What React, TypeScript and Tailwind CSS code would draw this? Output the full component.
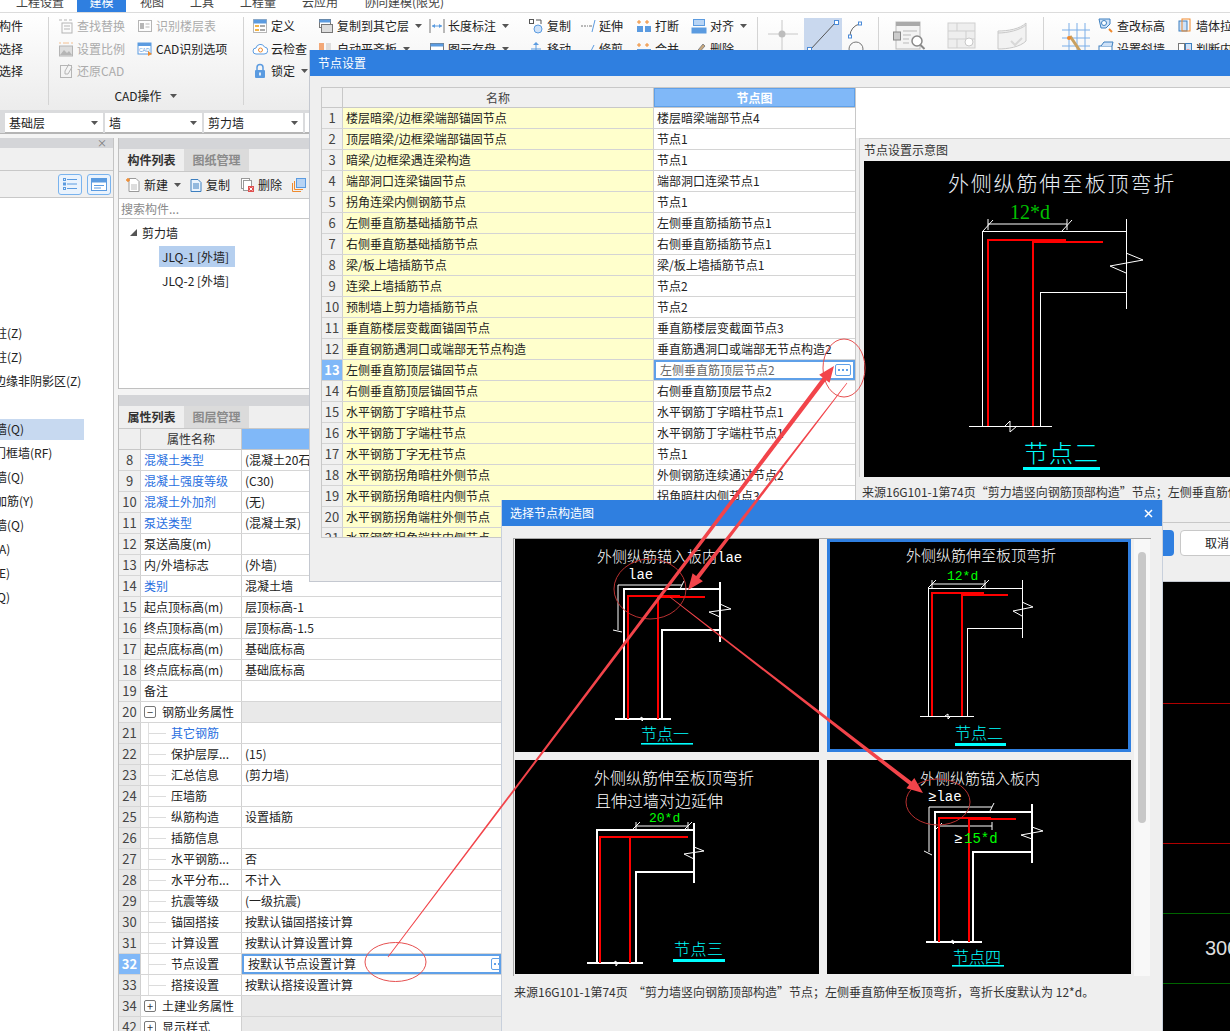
import React from "react";

const CJK = "Noto Sans CJK SC, sans-serif";

const Caret = ({ c = "#555" }: { c?: string }) => (
  <svg width="7" height="4" viewBox="0 0 7 4" className="shrink-0"><path d="M0 0h7L3.5 4z" fill={c} /></svg>
);

type IconName =
  | "find" | "scale" | "restore" | "layers" | "cadopt" | "define" | "cloud" | "lock" | "copylayer" | "flush"
  | "dim" | "store" | "copy" | "extend" | "move" | "trim" | "break" | "merge" | "align" | "del" | "level"
  | "pull" | "slant" | "judge";

const Icon = ({ n }: { n: IconName }) => {
  const g = "#b5b5b5";
  const b = "#5b9be0";
  const o = "#ef8a2e";
  const p: Record<IconName, React.ReactNode> = {
    find: (<><path d="M1 2h3M6 2h3M11 2h3" stroke={g} /><rect x="4" y="5" width="10" height="10" fill="none" stroke={g} /><path d="M6 8h6M6 11h6" stroke={g} /></>),
    scale: (<><path d="M2 1v2M14 1v2M5 2h6" stroke={o} opacity=".5" /><rect x="1.5" y="5" width="13" height="10" fill="#ddd" stroke={g} /><path d="M2 14l4-5 3 3 2-2 3 4z" fill={g} /></>),
    restore: (<><rect x="2.5" y="2.5" width="11" height="12" fill="none" stroke={g} /><path d="M11 1L7 8v3h3l4-7" fill="none" stroke={g} /></>),
    layers: (<><rect x="1.5" y="2.5" width="13" height="11" fill="none" stroke={g} /><rect x="3" y="5" width="4" height="6" fill={g} /><path d="M8.5 6h4M8.5 9h4" stroke={g} /></>),
    cadopt: (<><rect x="1" y="2" width="13" height="11" fill="#fff" stroke={b} /><rect x="1" y="2" width="13" height="3" fill={b} /><text x="2" y="11" fontSize="5" fill={b} fontFamily="Liberation Sans">CAD</text><path d="M11 10l4 3-4 2z" fill={o} /></>),
    define: (<><rect x="1.5" y="1.5" width="13" height="13" fill="#fff" stroke="#b7b7b7" /><rect x="1.5" y="1.5" width="13" height="4" fill={b} /><rect x="3" y="7" width="4" height="2" fill="#f3b447" /><rect x="8" y="7" width="5" height="2" fill="#aaa" /><rect x="3" y="11" width="4" height="2" fill="#f3b447" /><rect x="8" y="11" width="5" height="2" fill="#aaa" /></>),
    cloud: (<><path d="M4 13a3 3 0 010-6 4.5 4.5 0 018.5-1A3.5 3.5 0 0112 13z" fill="#fff" stroke={b} /><circle cx="8.5" cy="9" r="2" fill="none" stroke={o} /></>),
    lock: (<><path d="M5 7V4.5a3 3 0 016 0V7" fill="none" stroke={b} strokeWidth="1.5" /><rect x="3" y="7" width="10" height="8" rx="1" fill={b} /><rect x="7.2" y="9.5" width="1.6" height="3" fill="#fff" /></>),
    copylayer: (<><rect x="1.5" y="1.5" width="11" height="8" fill="#fff" stroke="#777" /><rect x="1.5" y="1.5" width="11" height="3" fill={b} /><rect x="3.5" y="6.5" width="11" height="8" fill="#ddd" stroke="#777" /></>),
    flush: (<><rect x="1" y="2" width="5" height="12" fill="#f3a877" /><rect x="8" y="2" width="5" height="12" fill="#ddd" /></>),
    dim: (<><path d="M1 1v14M15 1v14" stroke="#777" /><path d="M3 8h10" stroke={b} /><path d="M3 8l3-2v4zM13 8l-3-2v4z" fill={b} /></>),
    store: (<><rect x="1.5" y="2.5" width="13" height="11" fill="#fff" stroke="#777" /><rect x="1.5" y="2.5" width="13" height="3" fill={b} /></>),
    copy: (<><circle cx="10" cy="11" r="4" fill="#cfe2f8" stroke={b} /><rect x="1.5" y="1.5" width="4" height="4" fill="none" stroke="#555" /><path d="M8 2h5v4" fill="none" stroke="#555" /></>),
    extend: (<><path d="M1 8h7" stroke="#777" strokeDasharray="2 1" /><path d="M9 8h3" stroke="#777" /><path d="M15 2l-3 12" stroke={b} /></>),
    move: (<><path d="M8 1l3 3H5z" fill={b} /><path d="M8 4v8M3 8h10" stroke={b} /></>),
    trim: (<><path d="M1 10h6" stroke="#777" /><path d="M9 14l5-10" stroke={b} /></>),
    break: (<><path d="M3 2v4M1 4h4M11 2v4M9 4h4" stroke={o} /><rect x="1" y="8" width="6" height="6" fill={b} /><rect x="9" y="8" width="6" height="6" fill={b} /></>),
    merge: (<><path d="M3 2v4M1 4h4M11 2v4M9 4h4" stroke={o} /><rect x="1" y="8" width="14" height="6" fill={b} /></>),
    align: (<><rect x="2.5" y="1.5" width="11" height="6" fill="#b7d4f5" stroke={b} /><rect x="0.5" y="9.5" width="15" height="6" fill={b} /></>),
    del: (<><path d="M3 14L12 3l2 2-9 10z" fill="#c9a77b" stroke="#888" /></>),
    level: (<><path d="M1 1h11v5l-4 4H3z" fill="#cfe2f8" stroke="#3d7fbf" /><circle cx="6" cy="5" r="2.5" fill="#fff" stroke="#3d7fbf" /><path d="M11 11l3 3" stroke={o} strokeWidth="2" /></>),
    pull: (<><rect x="2" y="3" width="8" height="10" fill="#cfe2f8" stroke="#3d7fbf" /><rect x="5" y="1" width="8" height="12" fill="none" stroke={o} /></>),
    slant: (<><rect x="1" y="5" width="13" height="9" fill="#fff" stroke="#3d7fbf" /><path d="M3 5l3-4h9l-1 4" fill="#cfe2f8" stroke="#3d7fbf" /></>),
    judge: (<><rect x="1.5" y="2.5" width="6" height="10" fill="#fff" stroke="#777" /><rect x="8.5" y="2.5" width="6" height="10" fill="#cfe2f8" stroke="#3d7fbf" /><circle cx="11" cy="10" r="2" fill="#f08a8a" /></>),
  };
  return <svg width="16" height="16" viewBox="0 0 16 16" className="shrink-0">{p[n]}</svg>;
};

const RibbonRow = ({ n, t, gray, caret, gap = 3 }: { n: IconName; t: string; gray?: boolean; caret?: boolean; gap?: number }) => (
  <div className="flex items-center h-[22.5px] whitespace-nowrap">
    <Icon n={n} />
    <span className={gray ? "text-[#ababab]" : "text-[#222]"} style={{ marginLeft: gap }}>{t}</span>
    {caret && <span className="ml-[6px]"><Caret /></span>}
  </div>
);

const Divider = () => <div className="w-px h-[88px] mt-[4px] bg-[#d4d4d4] shrink-0" />;

const Ribbon = () => (
  <div className="flex h-[98px] shrink-0 border-t border-[#dcdcdc] bg-gradient-to-b from-white to-[#ececec] text-[12px] leading-[16px] overflow-hidden">
    <div className="w-[48px] shrink-0 pt-[2px]">
      <div className="w-[23px] flex flex-col items-end overflow-hidden">
        <div className="h-[22.5px] flex items-center whitespace-nowrap">构件</div>
        <div className="h-[22.5px] flex items-center whitespace-nowrap">选择</div>
        <div className="h-[22.5px] flex items-center whitespace-nowrap">性选择</div>
      </div>
    </div>
    <Divider />
    <div className="w-[194px] shrink-0 pl-[9px] pt-[2px]">
      <div className="flex">
        <div className="w-[79px]">
          <RibbonRow n="find" t="查找替换" gray />
          <RibbonRow n="scale" t="设置比例" gray />
          <RibbonRow n="restore" t="还原CAD" gray />
        </div>
        <div>
          <RibbonRow n="layers" t="识别楼层表" gray />
          <RibbonRow n="cadopt" t="CAD识别选项" />
        </div>
      </div>
      <div className="flex items-center justify-center gap-[8px] mt-[3px] ml-[-10px] h-[20px] text-[#222]">CAD操作 <Caret /></div>
    </div>
    <Divider />
    <div className="flex w-[513px] shrink-0 pl-[8px] pt-[2px]">
      <div className="w-[66px]">
        <RibbonRow n="define" t="定义" />
        <RibbonRow n="cloud" t="云检查" />
        <RibbonRow n="lock" t="锁定" caret />
      </div>
      <div className="w-[111px]">
        <RibbonRow n="copylayer" t="复制到其它层" caret />
        <RibbonRow n="flush" t="自动平齐板" caret />
      </div>
      <div className="w-[99px]">
        <RibbonRow n="dim" t="长度标注" caret />
        <RibbonRow n="store" t="图元存盘" caret />
      </div>
      <div className="w-[52px]">
        <RibbonRow n="copy" t="复制" />
        <RibbonRow n="move" t="移动" />
      </div>
      <div className="w-[56px]">
        <RibbonRow n="extend" t="延伸" />
        <RibbonRow n="trim" t="修剪" />
      </div>
      <div className="w-[55px]">
        <RibbonRow n="break" t="打断" />
        <RibbonRow n="merge" t="合并" />
      </div>
      <div>
        <RibbonRow n="align" t="对齐" caret />
        <RibbonRow n="del" t="删除" />
      </div>
    </div>
    <Divider />
    <div className="flex w-[120px] shrink-0 pt-[5px] items-start">
      <svg width="46" height="36" viewBox="0 0 46 36" className="shrink-0">
        <path d="M24 2v30M10 16h30" stroke="#c8c8c8" />
        <circle cx="24" cy="16" r="3.5" fill="#bdbdbd" />
      </svg>
      <div className="w-[38px] h-[40px] bg-[#c9d8ee] shrink-0">
        <svg width="38" height="40" viewBox="0 0 38 40">
          <path d="M6 32L32 4" stroke="#555" />
          <rect x="3.5" y="29.5" width="4" height="4" fill="#fff" stroke="#4a8ad8" />
          <rect x="30.5" y="2.5" width="4" height="4" fill="#fff" stroke="#4a8ad8" />
        </svg>
      </div>
      <svg width="20" height="44" viewBox="0 0 20 44" className="ml-[4px] shrink-0">
        <path d="M4 18a12 12 0 0 1 10-12" fill="none" stroke="#666" />
        <rect x="12.5" y="4" width="3" height="3" fill="#fff" stroke="#4a8ad8" />
        <rect x="2.5" y="17" width="3" height="3" fill="#fff" stroke="#4a8ad8" />
        <circle cx="10" cy="31" r="7" fill="none" stroke="#777" />
      </svg>
    </div>
    <Divider />
    <div className="flex w-[164px] shrink-0 pt-[8px] pl-[14px] gap-[20px] items-start">
      <svg width="34" height="30" viewBox="0 0 34 30" className="shrink-0">
        <rect x="3" y="1" width="24" height="27" fill="#f4f4f4" stroke="#bbb" />
        <rect x="3" y="1" width="24" height="4" fill="#aaa" />
        <rect x="0.5" y="11" width="7" height="8" fill="#ccc" stroke="#888" />
        <path d="M10 10h14M10 14h8M10 18h6M10 22h6" stroke="#bbb" />
        <circle cx="24" cy="20" r="5" fill="#fff" stroke="#888" strokeWidth="1.5" />
        <path d="M27.5 24l4 4" stroke="#888" strokeWidth="2" />
      </svg>
      <svg width="30" height="30" viewBox="0 0 30 30" className="shrink-0">
        <rect x="1" y="2" width="27" height="25" fill="#eee" stroke="#cfcfcf" />
        <path d="M1 10h27M1 18h27M10 2v8M19 10v8M10 18v9" stroke="#cfcfcf" />
        <circle cx="22" cy="21" r="4" fill="#fff" stroke="#c8c8c8" />
      </svg>
      <svg width="30" height="30" viewBox="0 0 30 30" className="shrink-0">
        <path d="M1 10c10 0 22-2 28-8v18c-6 6-18 8-28 8z" fill="#f2f2f2" stroke="#c8c8c8" />
        <path d="M1 12c10 0 22-3 28-8" fill="none" stroke="#c8c8c8" />
        <path d="M14 20l4 4 7-7" fill="none" stroke="#d8d8d8" strokeWidth="2" />
      </svg>
    </div>
    <Divider />
    <div className="flex flex-1 pl-[16px] pt-[2px] overflow-hidden">
      <svg width="30" height="36" viewBox="0 0 30 36" className="shrink-0 mt-[7px]">
        <path d="M2 8h28M2 16h28M2 24h28M9 1v32M17 1v32M25 1v32" stroke="#7aaee8" />
        <path d="M10 14l12 18" stroke="#c9a060" strokeWidth="3" />
        <circle cx="9" cy="16" r="2" fill="#ef8a2e" />
      </svg>
      <div className="w-[79px] ml-[8px] shrink-0">
        <RibbonRow n="level" t="查改标高" />
        <RibbonRow n="slant" t="设置斜墙" />
      </div>
      <div className="shrink-0">
        <RibbonRow n="pull" t="墙体拉通" />
        <RibbonRow n="judge" t="判断内外墙" />
      </div>
    </div>
  </div>
);

const Combo = ({ t, w }: { t: string; w: string }) => (
  <div className={`${w} h-[20px] bg-white border-b border-[#b5b5b5] flex items-center justify-between pl-[4px] pr-[5px] text-[12px] shrink-0`}>
    <span>{t}</span>
    <Caret />
  </div>
);

const LeftPanel = () => {
  const items: [string, string, boolean?][] = [
    ["柱(Z)", "-ml-[5px]"],
    ["柱(Z)", "-ml-[5px]"],
    ["边缘非阴影区(Z)", "-ml-[6px]"],
    ["", ""],
    ["墙(Q)", "-ml-[5px]", true],
    ["门框墙(RF)", "-ml-[6px]"],
    ["墙(Q)", "-ml-[5px]"],
    ["加筋(Y)", "-ml-[5px]"],
    ["墙(Q)", "-ml-[5px]"],
    ["(A)", "-ml-[5px]"],
    ["(E)", "-ml-[5px]"],
    ["(Q)", "-ml-[7px]"],
  ];
  return (
    <div className="w-[114px] shrink-0 bg-white border-r border-[#c4c4c4] flex flex-col overflow-hidden text-[12px]">
      <div className="h-[10px] shrink-0 bg-[#d4d5d8] flex items-center justify-end pr-[6px] text-[#777] text-[10px] leading-[10px]">×</div>
      <div className="h-[23px] shrink-0 bg-[#f0f0f0] border-b border-[#c8c8c8]" />
      <div className="h-[27px] shrink-0 bg-[#f0f0f0] border-b border-[#c8c8c8] flex items-center justify-end gap-[5px] pr-[2px]">
        <div className="w-[24px] h-[21px] rounded-[3px] border border-[#79b3ee] bg-[#eaf3fd] flex items-center justify-center">
          <svg width="14" height="12" viewBox="0 0 14 12"><path d="M4 1.5h10M4 6h10M4 10.5h10" stroke="#5b9be0" /><rect x="0.5" y="0.5" width="2" height="2" fill="none" stroke="#5b9be0" /><rect x="0.5" y="5" width="2" height="2" fill="none" stroke="#5b9be0" /><rect x="0.5" y="9.5" width="2" height="2" fill="none" stroke="#5b9be0" /></svg>
        </div>
        <div className="w-[24px] h-[21px] rounded-[3px] border border-[#79b3ee] bg-[#eaf3fd] flex items-center justify-center">
          <svg width="16" height="13" viewBox="0 0 16 13"><rect x="0.5" y="0.5" width="15" height="12" fill="#fff" stroke="#5b9be0" /><rect x="0.5" y="0.5" width="15" height="4" fill="#5b9be0" /><path d="M3 7.5h10M3 10h7" stroke="#5b9be0" /></svg>
        </div>
      </div>
      <div className="pt-[123px]">
        {items.map(([t, m, sel], i) => (
          <div key={i} className="h-[24px] flex items-center whitespace-nowrap">
            <div className={`h-[21px] flex items-center w-[84px] ${sel ? "bg-[#c7d9f0]" : ""}`}>
              <span className={m}>{t}</span>
            </div>
          </div>
        ))}
      </div>
    </div>
  );
};

const Tabs = ({ a, b }: { a: string; b: string }) => (
  <div className="h-[23px] shrink-0 flex bg-[#efefef] border-b border-[#c8c8c8] text-[12px] font-bold">
    <div className="w-[65px] flex items-center justify-center text-[#333]">{a}</div>
    <div className="w-[65px] flex items-center justify-center bg-[#dbdbdb] text-[#8a8a8a]">{b}</div>
  </div>
);

const MiniIcon = ({ k }: { k: number }) => (
  <svg width="16" height="16" viewBox="0 0 16 16" className="shrink-0">
    {k === 0 && (<><path d="M4 1.5h7l3 3v10H4z" fill="#fff" stroke="#9a9a9a" /><path d="M6 8h6M6 10h6M6 12h6" stroke="#bbb" /><path d="M3 1v4M1 3h4" stroke="#ef8a2e" strokeWidth="1.4" /></>)}
    {k === 1 && (<><path d="M3 2.5h7l3 3v9H3z" fill="#eaf3fd" stroke="#3d7fbf" /><path d="M5 7h6M5 9h6M5 11h6" stroke="#3d7fbf" /></>)}
    {k === 2 && (<><rect x="2.5" y="1.5" width="8" height="10" fill="#fff" stroke="#999" /><rect x="4.5" y="3.5" width="8" height="10" fill="#fff" stroke="#999" /><rect x="9" y="9" width="6" height="6" fill="#e05050" /><path d="M10.5 10.5l3 3M13.5 10.5l-3 3" stroke="#fff" /></>)}
    {k === 3 && (<><path d="M1.5 6v8.5H10M3.5 4v8.5H12" fill="none" stroke="#ef8a2e" /><rect x="5.5" y="1.5" width="9" height="9" fill="#b7d4f5" stroke="#5b9be0" /></>)}
  </svg>
);

const MidTop = () => (
  <div className="h-[251px] shrink-0 border-l border-r border-b border-[#c0c0c0] bg-white flex flex-col text-[12px] overflow-hidden">
    <div className="h-[11px] bg-[#d4d5d8] shrink-0" />
    <Tabs a="构件列表" b="图纸管理" />
    <div className="h-[27px] flex items-center bg-[#f0f0f0] border-b border-[#c8c8c8] pl-[6px] shrink-0 whitespace-nowrap">
      <MiniIcon k={0} /><span className="ml-[3px]">新建</span><span className="ml-[6px] mr-[7px]"><Caret /></span>
      <MiniIcon k={1} /><span className="ml-[2px] mr-[9px]">复制</span>
      <MiniIcon k={2} /><span className="ml-[3px] mr-[9px]">删除</span>
      <MiniIcon k={3} />
    </div>
    <div className="h-[20px] flex items-center pl-[2px] text-[#8a8a8a] border-b border-[#c8c8c8] shrink-0">搜索构件...</div>
    <div className="pl-[11px] pt-[3px]">
      <div className="h-[21px] flex items-center gap-[5px]">
        <svg width="7" height="7" viewBox="0 0 7 7"><path d="M7 0v7H0z" fill="#555" /></svg>
        <span>剪力墙</span>
      </div>
      <div className="ml-[29px] mt-[3px] w-[76px] h-[21px] bg-[#b5cfef] flex items-center pl-[3px] whitespace-nowrap">JLQ-1 [外墙]</div>
      <div className="ml-[29px] mt-[3px] h-[21px] flex items-center pl-[3px] whitespace-nowrap">JLQ-2 [外墙]</div>
    </div>
  </div>
);

const Dots = () => (
  <span className="w-[16px] h-[12px] border border-[#5fa0e8] rounded-[2px] flex items-center justify-center gap-[2px] shrink-0 bg-white">
    <span className="w-[2px] h-[2px] bg-[#5fa0e8]" />
    <span className="w-[2px] h-[2px] bg-[#5fa0e8]" />
    <span className="w-[2px] h-[2px] bg-[#5fa0e8]" />
  </span>
);

type Prop = { n: string; name: string; value?: string; blue?: boolean; tree?: boolean; group?: "+" | "-"; sel?: boolean };

const props: Prop[] = [
  { n: "8", name: "混凝土类型", value: "(混凝土20石)", blue: true },
  { n: "9", name: "混凝土强度等级", value: "(C30)", blue: true },
  { n: "10", name: "混凝土外加剂", value: "(无)", blue: true },
  { n: "11", name: "泵送类型", value: "(混凝土泵)", blue: true },
  { n: "12", name: "泵送高度(m)" },
  { n: "13", name: "内/外墙标志", value: "(外墙)" },
  { n: "14", name: "类别", value: "混凝土墙", blue: true },
  { n: "15", name: "起点顶标高(m)", value: "层顶标高-1" },
  { n: "16", name: "终点顶标高(m)", value: "层顶标高-1.5" },
  { n: "17", name: "起点底标高(m)", value: "基础底标高" },
  { n: "18", name: "终点底标高(m)", value: "基础底标高" },
  { n: "19", name: "备注" },
  { n: "20", name: "钢筋业务属性", group: "-" },
  { n: "21", name: "其它钢筋", tree: true, blue: true },
  { n: "22", name: "保护层厚...", value: "(15)", tree: true },
  { n: "23", name: "汇总信息", value: "(剪力墙)", tree: true },
  { n: "24", name: "压墙筋", tree: true },
  { n: "25", name: "纵筋构造", value: "设置插筋", tree: true },
  { n: "26", name: "插筋信息", tree: true },
  { n: "27", name: "水平钢筋...", value: "否", tree: true },
  { n: "28", name: "水平分布...", value: "不计入", tree: true },
  { n: "29", name: "抗震等级", value: "(一级抗震)", tree: true },
  { n: "30", name: "锚固搭接", value: "按默认锚固搭接计算", tree: true },
  { n: "31", name: "计算设置", value: "按默认计算设置计算", tree: true },
  { n: "32", name: "节点设置", value: "按默认节点设置计算", tree: true, sel: true },
  { n: "33", name: "搭接设置", value: "按默认搭接设置计算", tree: true },
  { n: "34", name: "土建业务属性", group: "+" },
  { n: "42", name: "显示样式", group: "+" },
];

const PropRow = ({ p, idx }: { p: Prop; idx: number }) => (
  <div className="flex h-[21px] border-b border-[#d6d6d6] shrink-0">
    <div className={`w-[22px] shrink-0 flex items-center justify-center border-r border-[#d0d0d0] text-[13px] ${p.sel ? "bg-[#80b8f8] text-white font-bold" : idx >= 13 ? "bg-[#e8e8e8] text-[#444]" : "bg-[#f0f0f0] text-[#444]"}`}>{p.n}</div>
    <div className={`w-[101px] shrink-0 flex items-center border-r border-[#d0d0d0] bg-white whitespace-nowrap ${p.blue ? "text-[#2a6fe0]" : "text-[#222]"}`}>
      {p.group && (
        <span className="ml-[3px] mr-[6px] w-[12px] h-[12px] border border-[#777] rounded-[2px] flex items-center justify-center text-[11px] leading-[10px] text-[#333]">{p.group === "-" ? "−" : "+"}</span>
      )}
      {p.tree && (<><span className="ml-[7px] w-px self-stretch bg-[#e0e0e0]" /><span className="w-[17px] h-px bg-[#dcdcdc]" /><span className="w-[5px]" /></>)}
      {!p.group && !p.tree && <span className="w-[3px]" />}
      <span>{p.name}</span>
    </div>
    {p.sel ? (
      <div className="flex-1 flex items-center justify-between border-2 border-[#5fa0e8] pl-[4px] bg-white overflow-hidden">
        <span>{p.value}</span>
        <span className="mr-[-8px]"><Dots /></span>
      </div>
    ) : (
      <div className={`flex-1 flex items-center pl-[3px] whitespace-nowrap ${p.group ? "bg-[#e9e9e9]" : "bg-white"}`}>{p.value}</div>
    )}
  </div>
);

const MidBottom = () => (
  <div className="flex-1 min-h-0 border-l border-r border-[#c0c0c0] bg-white flex flex-col text-[12px] overflow-hidden mt-[6px]">
    <div className="h-[11px] bg-[#d4d5d8] shrink-0" />
    <Tabs a="属性列表" b="图层管理" />
    <div className="flex h-[21px] border-b border-[#c8c8c8] shrink-0">
      <div className="w-[22px] bg-[#efefef] border-r border-[#c8c8c8]" />
      <div className="w-[101px] bg-[#efefef] border-r border-[#c8c8c8] flex items-center justify-center text-[#333]">属性名称</div>
      <div className="flex-1 bg-[#80b8f8]" />
    </div>
    {props.map((p, i) => <PropRow key={p.n} p={p} idx={i} />)}
  </div>
);

const nodes: [string, string][] = [
  ["楼层暗梁/边框梁端部锚固节点", "楼层暗梁端部节点4"],
  ["顶层暗梁/边框梁端部锚固节点", "节点1"],
  ["暗梁/边框梁遇连梁构造", "节点1"],
  ["端部洞口连梁锚固节点", "端部洞口连梁节点1"],
  ["拐角连梁内侧钢筋节点", "节点1"],
  ["左侧垂直筋基础插筋节点", "左侧垂直筋插筋节点1"],
  ["右侧垂直筋基础插筋节点", "右侧垂直筋插筋节点1"],
  ["梁/板上墙插筋节点", "梁/板上墙插筋节点1"],
  ["连梁上墙插筋节点", "节点2"],
  ["预制墙上剪力墙插筋节点", "节点2"],
  ["垂直筋楼层变截面锚固节点", "垂直筋楼层变截面节点3"],
  ["垂直钢筋遇洞口或端部无节点构造", "垂直筋遇洞口或端部无节点构造2"],
  ["左侧垂直筋顶层锚固节点", "左侧垂直筋顶层节点2"],
  ["右侧垂直筋顶层锚固节点", "右侧垂直筋顶层节点2"],
  ["水平钢筋丁字暗柱节点", "水平钢筋丁字暗柱节点1"],
  ["水平钢筋丁字端柱节点", "水平钢筋丁字端柱节点1"],
  ["水平钢筋丁字无柱节点", "节点1"],
  ["水平钢筋拐角暗柱外侧节点", "外侧钢筋连续通过节点2"],
  ["水平钢筋拐角暗柱内侧节点", "拐角暗柱内侧节点3"],
  ["水平钢筋拐角端柱外侧节点", "拐角端柱外侧节点1"],
  ["水平钢筋拐角端柱内侧节点", "拐角端柱内侧节点1"],
];

const NodeTable = () => (
  <div className="w-[535px] h-[451px] shrink-0 border border-[#c8c8c8] bg-white overflow-hidden text-[12px]">
    <div className="flex h-[20px] border-b border-[#c8c8c8]">
      <div className="w-[21px] bg-[#f0f0f0] border-r border-[#c8c8c8]" />
      <div className="w-[311px] bg-[#f0f0f0] border-r border-[#c8c8c8] flex items-center justify-center text-[#444]">名称</div>
      <div className="flex-1 bg-[#80b8f8] border border-[#5fa0e8] flex items-center justify-center text-white font-bold">节点图</div>
    </div>
    {nodes.map(([a, b], i) => {
      const sel = i === 12;
      return (
        <div key={i} className="flex h-[21px] border-b border-[#d4d4d4]">
          <div className={`w-[21px] shrink-0 flex items-center justify-center border-r border-[#d0d0d0] text-[13px] ${sel ? "bg-[#80b8f8] text-white font-bold" : "bg-[#f0f0f0] text-[#444]"}`}>{i + 1}</div>
          <div className="w-[311px] shrink-0 bg-[#ffffcc] border-r border-[#d0d0d0] flex items-center pl-[3px] text-[#222] whitespace-nowrap">{a}</div>
          {sel ? (
            <div className="flex-1 flex items-center justify-between border-2 border-[#5fa0e8] pl-[4px] pr-[2px]">
              <span className="text-[#666]">{b}</span>
              <Dots />
            </div>
          ) : (
            <div className="flex-1 flex items-center pl-[3px] text-[#222] whitespace-nowrap">{b}</div>
          )}
        </div>
      );
    })}
  </div>
);

type DProps = {
  walls: string[];
  reds: string[];
  thin?: string[];
  zig: string;
  brk: string;
  redW?: number;
  wallW?: number;
};

const Lines = ({ walls, reds, thin = [], zig, brk, redW = 2, wallW = 1 }: DProps) => (
  <>
    {walls.map((p, i) => <polyline key={i} points={p} fill="none" stroke="#fff" strokeWidth={wallW} shapeRendering="crispEdges" />)}
    {thin.map((p, i) => <polyline key={i} points={p} fill="none" stroke="#fff" strokeWidth="1" />)}
    <polyline points={zig} fill="none" stroke="#fff" strokeWidth="1" />
    <polyline points={brk} fill="none" stroke="#fff" strokeWidth="1" />
    {reds.map((p, i) => <polyline key={i} points={p} fill="none" stroke="#ff0000" strokeWidth={redW} shapeRendering="crispEdges" />)}
  </>
);

const Tx = ({ x, y, s, c = "#fff", f = CJK, ls = 0, t }: { x: number; y: number; s: number; c?: string; f?: string; ls?: number; t: string }) => (
  <text x={x} y={y} fontSize={s} fill={c} fontFamily={f} letterSpacing={ls} fontWeight={300}>{t}</text>
);

const MONO = "Liberation Mono, monospace";

const Preview = () => (
  <svg viewBox="863 161 367 316" width="367" height="316" className="block bg-black">
    <Tx x={947} y={191} s={21} ls={1.8} c="#e8eef5" t="外侧纵筋伸至板顶弯折" />
    <Tx x={1009} y={219} s={20} c="#00c000" f="Liberation Serif, serif" t="12*d" />
    <Lines
      walls={["1125,231 981,231 981,426", "1125,219 1125,309", "1125,292 1039,292 1039,426", "968,426 1051,426"]}
      thin={["987,224 1066,224", "987,219 987,230", "1066,219 1066,230", "982,231 992,220", "1061,231 1071,220"]}
      zig="1125,253 1142,260 1109,266 1125,273"
      brk="1004,426 1009,421 1009,432 1016,426"
      reds={["987,426 987,240 1065,240", "1032,426 1032,242 1102,242"]}
      redW={2.4}
    />
    <Tx x={1023} y={462} s={24} ls={1} c="#00ffff" t="节点二" />
    <rect x={1022} y={467} width={77} height={3} fill="#00ffff" />
  </svg>
);

const Cell1 = () => (
  <svg viewBox="515 539 304 213" width="304" height="213" className="block bg-black">
    <Tx x={597} y={562} s={15} t="外侧纵筋锚入板内" />
    <Tx x={717} y={562} s={14} f={MONO} t="lae" />
    <Tx x={628} y={579} s={14} f={MONO} t="lae" />
    <Lines
      walls={["720,589 624,589 624,719", "720,582 720,642", "720,630 662,630 662,719", "615,719 671,719"]}
      thin={["682,585 618,585 618,630", "613,630 622,632", "680,589 684,581"]}
      zig="720,604 731,609 709,612 720,617"
      brk="639,719 642,717 642,721 644,719"
      reds={["628,719 628,596 680,596", "658,719 658,597 705,597"]}
      wallW={1.5}
    />
    <Tx x={641} y={740} s={16} c="#00ffff" t="节点一" />
    <rect x={641} y={743} width={52} height={1.6} fill="#00ffff" />
  </svg>
);

const Cell2 = () => (
  <svg viewBox="830 542 298 207" width="298" height="207" className="block bg-black">
    <Tx x={906} y={561} s={15} t="外侧纵筋伸至板顶弯折" />
    <Tx x={947} y={580} s={13} c="#00ff00" f={MONO} t="12*d" />
    <Lines
      walls={["1022,588 928,588 928,716", "1022,580 1022,638", "1022,628 967,628 967,716", "920,716 974,716"]}
      thin={["932,584 985,584", "932,580 932,588", "985,580 985,588", "928,588 936,580", "981,588 989,580"]}
      zig="1022,602 1033,607 1013,611 1022,616"
      brk="945,716 948,714 948,719 951,716"
      reds={["932,716 932,593 984,593", "962,716 962,595 1008,595"]}
    />
    <Tx x={955} y={739} s={16} c="#00ffff" t="节点二" />
    <rect x={955} y={743} width={51} height={3} fill="#00ffff" />
  </svg>
);

const Cell3 = () => (
  <svg viewBox="515 760 304 214" width="304" height="214" className="block bg-black">
    <Tx x={594} y={784} s={16} t="外侧纵筋伸至板顶弯折" />
    <Tx x={595} y={807} s={16} t="且伸过墙对边延伸" />
    <Tx x={649} y={822} s={13} c="#00ff00" f={MONO} t="20*d" />
    <Lines
      walls={["694,830 597,830 597,963", "694,823 694,883", "694,872 636,872 636,963", "587,963 643,963"]}
      thin={["636,826 688,826", "636,822 636,830", "688,822 688,830", "632,830 640,822", "684,830 692,822"]}
      zig="694,847 704,851 684,854 694,859"
      brk="613,963 616,961 616,966 618,963"
      reds={["600,963 600,837 688,837", "630,963 630,837"]}
      wallW={1.5}
    />
    <Tx x={674} y={955} s={16} ls={0.5} c="#00ffff" t="节点三" />
    <rect x={673} y={959} width={52} height={3} fill="#00ffff" />
  </svg>
);

const Cell4 = () => (
  <svg viewBox="827 760 304 214" width="304" height="214" className="block bg-black">
    <Tx x={920} y={784} s={15} t="外侧纵筋锚入板内" />
    <Tx x={928} y={801} s={14} f={MONO} t="≥lae" />
    <Lines
      walls={["1032,812 935,812 935,942", "1032,804 1032,863", "1032,852 973,852 973,942", "926,942 982,942"]}
      thin={["992,807 929,807 929,852", "924,851 932,855", "990,811 994,803", "939,826 992,826", "992,822 992,830", "936,829 942,823"]}
      zig="1032,827 1043,831 1021,835 1032,839"
      brk="950,942 953,940 953,944 955,942"
      reds={["939,942 939,818 991,818", "969,942 969,819 1016,819"]}
      wallW={1.5}
    />
    <Tx x={954} y={843} s={14} f={MONO} t="≥" />
    <Tx x={964} y={843} s={14} c="#00ff00" f={MONO} t="15*d" />
    <Tx x={953} y={963} s={16} c="#00ffff" t="节点四" />
    <rect x={952} y={965} width={52} height={1.6} fill="#00ffff" />
  </svg>
);

const Arrow = ({ x1, y1, x2, y2, tw = 0.8, bw = 4.5, hl = 16, hw = 13 }: { x1: number; y1: number; x2: number; y2: number; tw?: number; bw?: number; hl?: number; hw?: number }) => {
  const dx = x2 - x1, dy = y2 - y1, L = Math.hypot(dx, dy);
  const ux = dx / L, uy = dy / L, nx = -uy, ny = ux;
  const bx = x2 - ux * hl, by = y2 - uy * hl;
  const pts = [
    [x1 + nx * tw / 2, y1 + ny * tw / 2],
    [bx + nx * bw / 2, by + ny * bw / 2],
    [bx + nx * hw / 2, by + ny * hw / 2],
    [x2, y2],
    [bx - nx * hw / 2, by - ny * hw / 2],
    [bx - nx * bw / 2, by - ny * bw / 2],
    [x1 - nx * tw / 2, y1 - ny * tw / 2],
  ].map((p) => p.join(",")).join(" ");
  return <polygon points={pts} fill="#f2444a" />;
};

const Annotations = () => (
  <svg viewBox="0 0 1230 1031" width="1230" height="1031" className="absolute left-0 top-0 pointer-events-none">
    <ellipse cx={395.5} cy={962} rx={30.5} ry={19.5} fill="none" stroke="#e65050" />
    <ellipse cx={844} cy={368} rx={21} ry={29} fill="none" stroke="#e65050" />
    <ellipse cx={650} cy={589} rx={36} ry={30} fill="none" stroke="#b83030" />
    <ellipse cx={938} cy={802} rx={32} ry={23} fill="none" stroke="#b83030" />
    <Arrow x1={388} y1={957} x2={834} y2={366} />
    <Arrow x1={847} y1={383} x2={688} y2={590} tw={0.6} bw={4} />
    <Arrow x1={670} y1={597} x2={923} y2={793} tw={0.8} bw={4} />
  </svg>
);

const NodeSettings = () => (
  <div className="absolute left-[309px] top-[50px] w-[921px] h-[532px] bg-[#efefef] border-l border-b border-[#c4c8d0] flex flex-col text-[12px]">
    <div className="h-[26px] shrink-0 bg-[#2f7fe0] text-white flex items-center pl-[8px]">节点设置</div>
    <div className="flex pt-[11px] pl-[11px] overflow-hidden">
      <NodeTable />
      <div className="flex-1 min-w-0 flex flex-col">
        <div className="h-[51px] bg-white border-t border-[#c8c8c8] shrink-0" />
        <div className="ml-[3px] border-t border-l border-[#d0d0d0] pl-[4px]">
          <div className="h-[22px] flex items-center text-[#333]">节点设置示意图</div>
          <Preview />
        </div>
        <div className="pl-[6px] h-[30px] flex items-center whitespace-nowrap text-[#333]">来源16G101-1第74页“剪力墙竖向钢筋顶部构造”节点；左侧垂直筋伸至板顶弯折，弯折长度默认为 12*d。</div>
        <div className="mt-[15px] border-t border-[#c8c8c8] pt-[7px] flex gap-[6px] pl-[244px]">
          <div className="w-[74px] h-[26px] rounded-[4px] bg-[#2f7fe0] text-white flex items-center justify-center shrink-0">确定</div>
          <div className="w-[74px] h-[26px] rounded-[4px] bg-white border border-[#c8c8c8] flex items-center justify-center shrink-0">取消</div>
        </div>
      </div>
    </div>
  </div>
);

const SelectDialog = () => (
  <div className="absolute left-[501px] top-[500px] w-[662px] h-[531px] bg-[#efefef] border-r border-l border-[#c8d0dc] flex flex-col text-[12px]">
    <div className="h-[26px] shrink-0 bg-[#2f7fe0] text-white flex items-center justify-between pl-[8px] pr-[9px]">
      <span>选择节点构造图</span>
      <svg width="9" height="9" viewBox="0 0 9 9"><path d="M1 1l7 7M8 1l-7 7" stroke="#fff" strokeWidth="1.5" /></svg>
    </div>
    <div className="ml-[11px] mt-[12px] w-[638px] h-[438px] border-t border-l border-[#a8a8a8] flex shrink-0">
      <div className="w-[620px] pl-[1px] grid grid-cols-[304px_304px] gap-x-[8px] gap-y-[8px] content-start">
        <Cell1 />
        <div className="h-[213px] border-[3px] border-[#2f7fe0]"><Cell2 /></div>
        <Cell3 />
        <Cell4 />
      </div>
      <div className="w-[16px] bg-[#f8f8f8] flex justify-center pt-[13px]">
        <div className="w-[8px] h-[271px] rounded-[4px] bg-[#c8c8c8]" />
      </div>
    </div>
    <div className="ml-[12px] mt-[8px] whitespace-nowrap text-[#333]">来源16G101-1第74页&nbsp;&nbsp;“剪力墙竖向钢筋顶部构造”节点；左侧垂直筋伸至板顶弯折，弯折长度默认为 12*d。</div>
  </div>
);

const CadCanvas = () => (
  <div className="flex-1 bg-black overflow-hidden">
    <svg viewBox="502 138 728 893" width="728" height="893" className="block">
      <path d="M502 703.5H1230M502 843.5H1230" stroke="#b00000" />
      <path d="M502 913.5H1230M502 983.5H1230" stroke="#006400" />
      <text x={1205} y={955} fontSize={20} fill="#ddd" fontFamily="Liberation Sans, sans-serif">300</text>
    </svg>
  </div>
);

export default function App() {
  return (
    <div className="relative w-[1230px] h-[1031px] overflow-hidden bg-white font-['Noto_Sans_CJK_SC',sans-serif] text-[#222] flex flex-col leading-[16px]">
      <div className="h-[12px] shrink-0 overflow-hidden flex text-[12px] text-[#444] bg-white">
        <div className="w-[16px] shrink-0" />
        <div className="w-[61px] -mt-[6px] h-[16px] whitespace-nowrap shrink-0">工程设置</div>
        <div className="w-[49px] bg-[#2f7fe0] text-white text-center shrink-0"><div className="-mt-[6px]">建模</div></div>
        <div className="ml-[14px] w-[50px] -mt-[6px] h-[16px] whitespace-nowrap shrink-0">视图</div>
        <div className="w-[50px] -mt-[6px] h-[16px] whitespace-nowrap shrink-0">工具</div>
        <div className="w-[62px] -mt-[6px] h-[16px] whitespace-nowrap shrink-0">工程量</div>
        <div className="w-[62px] -mt-[6px] h-[16px] whitespace-nowrap shrink-0">云应用</div>
        <div className="-mt-[6px] h-[16px] whitespace-nowrap shrink-0">协同建模(限免)</div>
      </div>
      <Ribbon />
      <div className="h-[24px] shrink-0 bg-[#dadbdd] flex items-end gap-[2px] pl-[5px] border-b border-[#b5b5b5]">
        <Combo t="基础层" w="w-[98px]" />
        <Combo t="墙" w="w-[97px]" />
        <Combo t="剪力墙" w="w-[99px]" />
        <Combo t="" w="w-[100px]" />
      </div>
      <div className="flex-1 flex pt-[4px] bg-[#f4f4f4] min-h-0">
        <LeftPanel />
        <div className="w-[384px] ml-[4px] shrink-0 flex flex-col min-h-0">
          <MidTop />
          <MidBottom />
        </div>
        <CadCanvas />
      </div>
      <NodeSettings />
      <SelectDialog />
      <Annotations />
    </div>
  );
}
